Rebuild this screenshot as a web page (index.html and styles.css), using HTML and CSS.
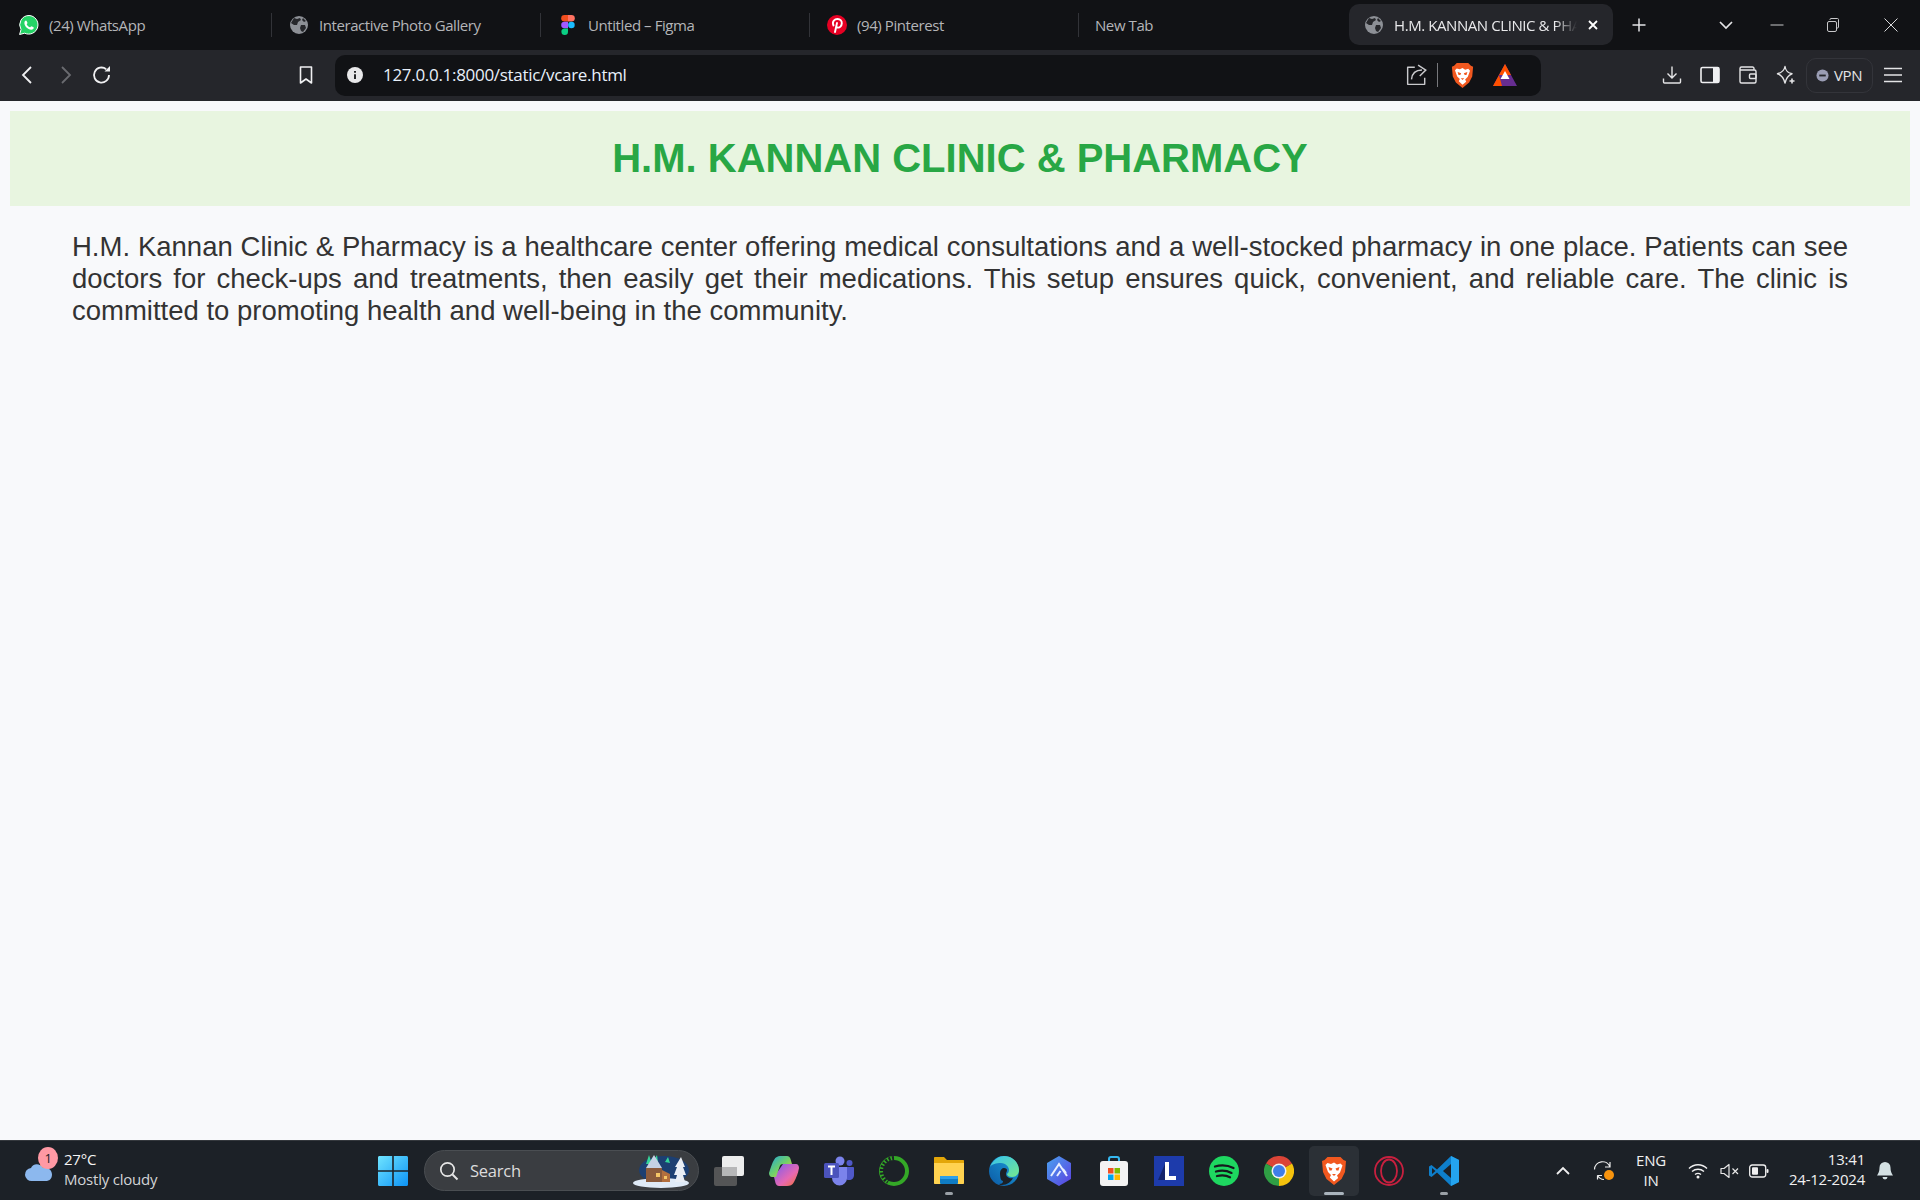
FILE: index.html
```html
<!DOCTYPE html>
<html lang="en">
  <head>
    <meta charset="UTF-8" />
    <meta name="viewport" content="width=device-width, initial-scale=1.0" />
    <title>H.M. KANNAN CLINIC &amp; PHARMACY</title>
    <link rel="stylesheet" href="styles.css">
  </head>
  <body>
    <!-- tab strip -->
    <div class="tabbar">
      <div class="tab">
        <svg class="favicon" viewBox="0 0 20 20"><path d="M10 .5a9.300 9.300 0 0 0-8 14L.6 19.500l5.100-1.300A9.300 9.300 0 1 0 10 .5z" fill="#25d366" stroke="#fff" stroke-width="1"/><path d="M7 5.500c-.6 0-1.600.8-1.600 2.500 0 3 3.400 6.500 6.800 6.700 1.700 0 2.600-1.100 2.600-2 0-.4-2.200-1.500-2.500-1.500s-.9 1.100-1.300 1.100c-.9 0-3-1.900-3.300-3 0-.4.8-.9.800-1.300S7.400 5.500 7 5.500z" fill="#fff"/></svg>
        <span>(24) WhatsApp</span>
      </div>
      <div class="tab">
        <svg class="favicon" viewBox="0 0 20 20"><circle cx="10" cy="10" r="9" fill="#8d9096"/><path d="M5 3l3 1 3-1 1 2-3 2-1 3-3 0-3-2zM12 10l4 0 1 3-3 4-2-1-1-3zM14 3l3 3-2 1-2-2z" fill="#26272b"/></svg>
        <span>Interactive Photo Gallery</span>
      </div>
      <div class="tab">
        <svg class="favicon" viewBox="0 0 14 20"><path d="M3.500 0H7v6.600H3.500a3.300 3.300 0 0 1 0-6.600z" fill="#f24e1e"/><path d="M7 0h3.500a3.300 3.300 0 0 1 0 6.600H7z" fill="#ff7262"/><path d="M3.500 6.700H7v6.600H3.500a3.300 3.300 0 0 1 0-6.600z" fill="#a259ff"/><circle cx="10.400" cy="10" r="3.300" fill="#1abcfe"/><path d="M3.500 13.400H7v3.300a3.300 3.300 0 1 1-3.500-3.300z" fill="#0acf83"/></svg>
        <span>Untitled – Figma</span>
      </div>
      <div class="tab">
        <svg class="favicon" viewBox="0 0 20 20"><circle cx="10" cy="10" r="10" fill="#e60023"/><path d="M8 17l2-9M6.500 10.500C4.500 6 8 4 10.500 4c3 0 4.500 2 4.300 4.300-.2 2.700-2 4.700-4.300 4.200-1-.2-1.400-1-1.400-1" fill="none" stroke="#fff" stroke-width="1.900" stroke-linecap="round"/></svg>
        <span>(94) Pinterest</span>
      </div>
      <div class="tab tab-plain">
        <span>New Tab</span>
      </div>
      <div class="tab-active">
        <svg class="favicon" viewBox="0 0 20 20"><circle cx="10" cy="10" r="9" fill="#8d9096"/><path d="M5 3l3 1 3-1 1 2-3 2-1 3-3 0-3-2zM12 10l4 0 1 3-3 4-2-1-1-3zM14 3l3 3-2 1-2-2z" fill="#26272b"/></svg>
        <span class="tab-title">H.M. KANNAN CLINIC &amp; PHARMACY</span>
        <svg class="tab-close" viewBox="0 0 12 12"><path d="M2 2l8 8M10 2l-8 8" stroke="#fff" stroke-width="1.800"/></svg>
      </div>
      <svg class="new-tab" viewBox="0 0 16 16"><path d="M8 1.500v13M1.500 8h13" stroke="#e4e4e6" stroke-width="1.500"/></svg>
      <div class="window-btns">
        <svg class="win-icon" viewBox="0 0 16 16"><path d="M2 5l6 6 6-6" fill="none" stroke="#e4e4e6" stroke-width="1.700"/></svg>
        <svg class="win-icon" viewBox="0 0 16 16"><path d="M1.500 8h13" stroke="#c8c8ca" stroke-width="1"/></svg>
        <svg class="win-icon" viewBox="0 0 16 16"><rect x="2.500" y="4.500" width="9" height="10" rx="1.500" fill="none" stroke="#c8c8ca"/><path d="M5 3V2.500c0-.6.400-1 1-1h6.500c.6 0 1 .4 1 1V10c0 .6-.4 1-1 1H12" fill="none" stroke="#c8c8ca"/></svg>
        <svg class="win-icon" viewBox="0 0 16 16"><path d="M1.500 1.500l13 13M14.500 1.500l-13 13" stroke="#d8d8da" stroke-width="1"/></svg>
      </div>
    </div>

    <!-- toolbar and address bar -->
    <div class="toolbar">
      <div class="nav-btns">
        <svg class="tool-icon" viewBox="0 0 20 20"><path d="M13 2l-8 8 8 8" fill="none" stroke="#f0f0f2" stroke-width="1.800"/></svg>
        <svg class="tool-icon" viewBox="0 0 20 20"><path d="M7 2l8 8-8 8" fill="none" stroke="#6a6b70" stroke-width="1.800"/></svg>
        <svg class="tool-icon" viewBox="0 0 20 20"><path d="M17 10a7.500 7.500 0 1 1-2.800-5.800" fill="none" stroke="#f0f0f2" stroke-width="1.800"/><path d="M12.500 6.500h5.500v-5.500z" fill="#f0f0f2"/></svg>
        <svg class="tool-icon bookmark" viewBox="0 0 20 20"><path d="M4.500 2h11v16L10 14l-5.500 4z" fill="none" stroke="#f0f0f2" stroke-width="1.600" stroke-linejoin="round"/></svg>
      </div>
      <div class="address">
        <svg class="info-icon" viewBox="0 0 16 16"><circle cx="8" cy="8" r="8" fill="#e8e8ea"/><path d="M8 4v1.800M8 7.200V12" stroke="#111215" stroke-width="1.800"/></svg>
        <span class="url">127.0.0.1:8000/static/vcare.html</span>
        <svg class="share-icon" viewBox="0 0 20 20"><path d="M8 3H1.500v15.500h15.500v-6" fill="none" stroke="#c9c9cc" stroke-width="1.300" stroke-linejoin="round"/><path d="M5 14c.5-5.500 4-8.500 9.500-8.500M11 1l7 4.500-5.500 5.500" fill="none" stroke="#c9c9cc" stroke-width="1.300"/></svg>
        <span class="addr-sep"></span>
        <svg class="lion" viewBox="0 0 26 30"><path d="M6.500 1h13l3 3 2.500 1-1 11-3.500 7-7.500 6-7.500-6L2 16 1 5l2.500-1z" fill="#f1581f"/><path d="M13 6.500l-3 1.500-3.500-1-2 2 2.500 7 3 3-1.200 2.500L13 25.500l4.200-3.500-1.200-2.500 3-3 2.500-7-2-2-3.500 1z" fill="#fff"/><path d="M7.500 11l4 1.500-1 2-2 0zM18.500 11l-4 1.500 1 2 2 0zM11 18h4l-2 2z" fill="#f1581f"/></svg>
        <svg class="bat" viewBox="0 0 24 22"><path d="M12 0l12 22H0z" fill="#662d91"/><path d="M12 0l6 11H6z" fill="#ff5000"/><path d="M6 11L0 22h9z" fill="#ff5000"/><path d="M12 7l4.500 8h-9z" fill="#fff"/></svg>
      </div>
      <div class="tool-right">
        <svg class="tool-icon" viewBox="0 0 20 20"><path d="M10 1.500v11M5.500 8.500l4.500 4.500 4.500-4.500M1.500 13.500v3.500c0 .5.500 1 1 1h15c.5 0 1-.5 1-1v-3.500" fill="none" stroke="#e4e4e6" stroke-width="1.400"/></svg>
        <svg class="tool-icon" viewBox="0 0 20 20"><rect x="1" y="2.500" width="18" height="15" rx="1.500" fill="none" stroke="#f0f0f2" stroke-width="1.600"/><rect x="13" y="2.500" width="6" height="15" fill="#f0f0f2"/></svg>
        <svg class="tool-icon" viewBox="0 0 20 20"><path d="M16 5V3.500c0-.8-.6-1.500-1.500-1.500H3.500C2.600 2 2 2.700 2 3.500v13c0 .8.600 1.500 1.500 1.500h13c.8 0 1.500-.7 1.500-1.500V6.500C18 5.700 17.400 5 16.500 5H2" fill="none" stroke="#e4e4e6" stroke-width="1.400"/><rect x="11.500" y="9" width="6.500" height="4.500" rx="1" fill="none" stroke="#e4e4e6" stroke-width="1.400"/></svg>
        <svg class="tool-icon" viewBox="0 0 20 20"><path d="M9 1.500c.6 4 2 6 7 7.300-3.600 1.300-5.600 3.500-7 9.200-1.400-5.700-3.400-7.900-7.500-9.200 4.800-1.300 6.800-3.300 7.500-7.300z" fill="none" stroke="#e4e4e6" stroke-width="1.400" stroke-linejoin="round"/><path d="M16 13.500v5M13.500 16h5" stroke="#e4e4e6" stroke-width="1.600"/></svg>
        <div class="vpn">
          <svg class="vpn-dot" viewBox="0 0 14 14"><circle cx="7" cy="7" r="6.500" fill="#9a9db4"/><path d="M3.500 7h7" stroke="#25262b" stroke-width="2"/></svg>
          <span>VPN</span>
        </div>
        <svg class="tool-icon menu" viewBox="0 0 20 20"><path d="M1 3.500h18M1 10h18M1 16.500h18" stroke="#e4e4e6" stroke-width="1.400"/></svg>
      </div>
    </div>

    <!-- page content -->
    <main class="page">
      <header class="clinic-header">
        <h1>H.M. KANNAN CLINIC &amp; PHARMACY</h1>
      </header>
      <p class="intro">H.M. Kannan Clinic &amp; Pharmacy is a healthcare center offering medical consultations and a well-stocked pharmacy in one place. Patients can see doctors for check-ups and treatments, then easily get their medications. This setup ensures quick, convenient, and reliable care. The clinic is committed to promoting health and well-being in the community.</p>
    </main>

    <!-- windows taskbar -->
    <footer class="taskbar">
      <div class="weather">
        <svg class="weather-icon" viewBox="0 0 32 24"><circle cx="21" cy="8" r="5" fill="#f58a1f"/><path d="M8 23a6.500 6.500 0 0 1-1-13C8.500 5.500 16 4.500 19 10c5-1.500 9 2 9 6.500s-3 6.500-6 6.500z" fill="#8cb8ee"/></svg>
        <span class="weather-badge">1</span>
        <div class="weather-text">
          <span class="temp">27°C</span>
          <span>Mostly cloudy</span>
        </div>
      </div>

      <svg class="start" viewBox="0 0 30 30">
        <defs><linearGradient id="winblue" x1="0" y1="0" x2="1" y2="1"><stop offset="0" stop-color="#6fe4ff"/><stop offset="1" stop-color="#0d93f5"/></linearGradient></defs>
        <path d="M0 1.500C0 .6.600 0 1.500 0h12.700v14.200H0zM15.800 0h12.700c.9 0 1.500.6 1.500 1.500v12.700H15.800zM0 15.800h14.200V30H1.500C.6 30 0 29.400 0 28.500zM15.800 15.800H30v12.700c0 .9-.6 1.500-1.500 1.500H15.800z" fill="url(#winblue)"/>
      </svg>

      <div class="search">
        <svg class="search-icon" viewBox="0 0 20 20"><circle cx="8.500" cy="8.500" r="6.700" fill="none" stroke="#e6e6e6" stroke-width="1.700"/><path d="M13.500 13.500l5 5" stroke="#e6e6e6" stroke-width="2"/></svg>
        <span>Search</span>
        <svg class="search-art" viewBox="0 0 58 34">
          <ellipse cx="32" cy="16" rx="25" ry="14" fill="#1c3f72"/>
          <path d="M14 10l3-9 3 9zM21 8l4-7 1 7zM33 8l3-5 2 6z" fill="#35d49a"/>
          <ellipse cx="29" cy="29" rx="28" ry="5" fill="#dfeaf7"/>
          <path d="M14 14L22 1l8 13z" fill="#c5d2e4"/>
          <rect x="14" y="14" width="16" height="14" fill="#8a5a3c"/>
          <path d="M30 16l8 4v8h-8z" fill="#b36f3e"/>
          <path d="M24 19h4v4h-4zM32 22h3v3h-3z" fill="#f6c667"/>
          <path d="M49 3l4 10h-2l3 8h-3l2 7h-10l2-7h-3l3-8h-2z" fill="#e9eef5"/>
        </svg>
      </div>

      <div class="apps">
        <div class="app">
          <svg class="app-icon" viewBox="0 0 30 30"><rect x="0" y="11" width="23" height="19" rx="2" fill="#545556"/><rect x="8" y="0" width="22" height="20" rx="2" fill="#eceded"/><rect x="8" y="11" width="15" height="9" fill="#b6b7b8"/></svg>
        </div>
        <div class="app">
          <svg class="app-icon" viewBox="0 0 30 30">
            <defs><linearGradient id="cop" x1="0" y1="0" x2="1" y2="1"><stop offset="0" stop-color="#1fa6d9"/><stop offset=".5" stop-color="#6fd06a"/><stop offset="1" stop-color="#f5c43c"/></linearGradient><linearGradient id="cop2" x1="0" y1="0" x2="1" y2="1"><stop offset="0" stop-color="#7a5cf0"/><stop offset=".6" stop-color="#e668b3"/><stop offset="1" stop-color="#f5732e"/></linearGradient></defs>
            <path d="M18 30h-8c-1.500 0-3-1-3.500-3L5 21l9-13h13c2 0 3 2 3 4-1 6-3 10-5 14-1.500 3-4 4-7 4z" fill="url(#cop2)"/>
            <path d="M11 0h7c1.500 0 3 1 3.500 3l1.500 5h-9c-2 0-3 1-3.500 3L7 21H3c-2 0-3-2-3-4 2-6 3-10 5-13 1.500-3 4-4 6-4z" fill="url(#cop)"/>
          </svg>
        </div>
        <div class="app">
          <svg class="app-icon" viewBox="0 0 30 30"><circle cx="16" cy="5" r="4.500" fill="#7b83eb"/><circle cx="25.500" cy="7" r="3" fill="#5059c9"/><path d="M20 11h9c.5 0 1 .5 1 1v7c0 3-2 5-5 5s-5-2-5-5z" fill="#5059c9"/><path d="M8 11h15v11a7.500 7.500 0 0 1-15 0z" fill="#7b83eb"/><rect x="0" y="7" width="15" height="15" rx="1.500" fill="#4b53bc"/><path d="M4 10.500h7M7.500 10.500V19" stroke="#fff" stroke-width="2"/></svg>
        </div>
        <div class="app">
          <svg class="app-icon" viewBox="0 0 30 30"><circle cx="15" cy="15" r="13" fill="none" stroke="#34a827" stroke-width="4"/><path d="M15 2A13 13 0 0 0 9 26" fill="none" stroke="#1c2127" stroke-width="4" stroke-dasharray="2 1.500"/></svg>
        </div>
        <div class="app app-open">
          <svg class="app-icon" viewBox="0 0 30 30"><path d="M0 2c0-.6.400-1 1-1h9l3 3h16c.6 0 1 .4 1 1v22H0z" fill="#e3a608"/><path d="M0 7h30v20c0 .6-.4 1-1 1H1c-.6 0-1-.4-1-1z" fill="#ffd250"/><rect x="6" y="20" width="18" height="8" rx="1" fill="#0f7cc4"/><rect x="6" y="20" width="18" height="3" rx="1" fill="#2ea0e8"/></svg>
        </div>
        <div class="app">
          <svg class="app-icon" viewBox="0 0 30 30">
            <defs><linearGradient id="edge" x1="0" y1="1" x2="1" y2="0"><stop offset="0" stop-color="#0c59a4"/><stop offset="1" stop-color="#1ba0dc"/></linearGradient><linearGradient id="edge2" x1="0" y1="0" x2="1" y2="1"><stop offset="0" stop-color="#35c1f1"/><stop offset="1" stop-color="#75ea8e"/></linearGradient></defs>
            <circle cx="15" cy="15" r="15" fill="url(#edge)"/>
            <path d="M1 11C4 3 11 0 15 0c9 0 15 7 15 14 0 4-3 7-7 7-3 0-5-1-5-3 1-1 2-2 2-4 0-3-3-7-8-7-5 0-9 1-11 4z" fill="url(#edge2)"/>
            <path d="M11 17c0-3 2-5 4-5s3 1 3 2c0 2-1 2-1 4 0 3 4 5 7 4-2 4-6 7-11 7-1 0-2 0-3-1 3 0 4-1 4-3-2 0-3-3-3-8z" fill="#1c2127"/>
          </svg>
        </div>
        <div class="app">
          <svg class="app-icon" viewBox="0 0 30 30">
            <defs><linearGradient id="hex" x1="0" y1="0" x2="1" y2="1"><stop offset="0" stop-color="#4aa3f0"/><stop offset="1" stop-color="#5b3fe0"/></linearGradient></defs>
            <path d="M15 0l12 7v16l-12 7-12-7V7z" fill="url(#hex)"/>
            <path d="M7 20l8-12 8 12M13 20l3.500-5M19 13l3 4" fill="none" stroke="#e8eeff" stroke-width="2"/>
          </svg>
        </div>
        <div class="app">
          <svg class="app-icon" viewBox="0 0 30 30"><path d="M10 6V3c0-1 .8-2 2-2h6c1.200 0 2 1 2 2v3" fill="none" stroke="#35b8f0" stroke-width="2"/><rect x="1" y="5" width="28" height="25" rx="3" fill="#f3f3f3"/><rect x="9" y="12" width="5.500" height="5.500" fill="#f25022"/><rect x="15.500" y="12" width="5.500" height="5.500" fill="#7fba00"/><rect x="9" y="18.500" width="5.500" height="5.500" fill="#00a4ef"/><rect x="15.500" y="18.500" width="5.500" height="5.500" fill="#ffb900"/></svg>
        </div>
        <div class="app">
          <svg class="app-icon" viewBox="0 0 30 30"><rect width="30" height="30" fill="#1d3bab"/><path d="M11 8v16H4z" fill="#14246b"/><path d="M11 6h4v14h7v4H11z" fill="#fff"/></svg>
        </div>
        <div class="app">
          <svg class="app-icon" viewBox="0 0 30 30"><circle cx="15" cy="15" r="15" fill="#1ed760"/><path d="M6 10.500c6-1.700 13-1.200 18.500 1.500M7 15.500c5-1.300 11-.9 15.500 1.400M8 20c4.500-1 9.500-.7 13 1.300" fill="none" stroke="#16191d" stroke-width="2.300" stroke-linecap="round"/></svg>
        </div>
        <div class="app">
          <svg class="app-icon" viewBox="0 0 30 30"><path d="M15 15L2 7.500A15 15 0 0 1 28 7.500z" fill="#db4437"/><path d="M15 15l13-7.500A15 15 0 0 1 15 30z" fill="#f4c20d"/><path d="M15 15v15A15 15 0 0 1 2 7.500z" fill="#2f9e44"/><circle cx="15" cy="15" r="7.500" fill="#f1f1f1"/><circle cx="15" cy="15" r="6" fill="#3f7ee8"/></svg>
        </div>
        <div class="app app-active">
          <svg class="app-icon" viewBox="0 0 26 30"><path d="M6.500 1h13l3 3 2.500 1-1 11-3.500 7-7.500 6-7.500-6L2 16 1 5l2.500-1z" fill="#f1581f"/><path d="M13 6.500l-3 1.500-3.500-1-2 2 2.500 7 3 3-1.200 2.500L13 25.500l4.200-3.500-1.200-2.500 3-3 2.500-7-2-2-3.500 1z" fill="#fff"/><path d="M7.500 11l4 1.500-1 2-2 0zM18.500 11l-4 1.500 1 2 2 0zM11 18h4l-2 2z" fill="#f1581f"/></svg>
        </div>
        <div class="app">
          <svg class="app-icon" viewBox="0 0 30 30"><circle cx="15" cy="15" r="14" fill="none" stroke="#c8203f" stroke-width="1.800"/><ellipse cx="15" cy="15" rx="8" ry="11.500" fill="none" stroke="#c8203f" stroke-width="1.800"/></svg>
        </div>
        <div class="app app-open">
          <svg class="app-icon" viewBox="0 0 30 30"><path d="M22 0l8 4v22l-8 4L8 16.500 2.500 21 0 19.500V10.500L2.500 9 8 13.500z" fill="#0e7fcb"/><path d="M22 0l8 4v22l-8 4z" fill="#24a4ef"/><path d="M22 8l-8 7 8 7z" fill="#1c2127"/><path d="M3 12l3.500 3L3 18z" fill="#1c2127"/></svg>
        </div>
      </div>

      <div class="tray">
        <svg class="tray-chevron" viewBox="0 0 14 10"><path d="M1 8l6-6 6 6" fill="none" stroke="#f0f0f0" stroke-width="1.800"/></svg>
        <svg class="tray-sync" viewBox="0 0 22 22"><path d="M1.500 9.500A8 8 0 0 1 17 7M17 2v5h-5M4.500 15.500h4.500M4.500 15.500v4" fill="none" stroke="#ededed" stroke-width="1.200"/><path d="M4.500 15.500A8 8 0 0 0 11 19.500" fill="none" stroke="#ededed" stroke-width="1.200"/><circle cx="16" cy="15" r="5" fill="#f7930e"/></svg>
        <div class="lang"><span>ENG</span><span>IN</span></div>
        <svg class="tray-wifi" viewBox="0 0 20 16"><path d="M1 5.500c5-5 13-5 18 0M4 8.500c3.500-3 8.500-3 12 0M7 11.500c1.700-1.300 4.300-1.300 6 0" fill="none" stroke="#f0f0f0" stroke-width="1.400"/><circle cx="10" cy="14" r="1.500" fill="#f0f0f0"/></svg>
        <svg class="tray-sound" viewBox="0 0 20 16"><path d="M1 5.500h3L9 1.500v13L4 10.500H1z" fill="none" stroke="#e8e8e8" stroke-width="1.200" stroke-linejoin="round"/><path d="M12.500 5.500l5.500 5.500M18 5.500L12.500 11" stroke="#e8e8e8" stroke-width="1.200"/></svg>
        <svg class="tray-battery" viewBox="0 0 20 14"><rect x=".7" y="1" width="16" height="12" rx="2.500" fill="none" stroke="#f0f0f0" stroke-width="1.300"/><rect x="3" y="3.200" width="6" height="7.600" rx="1" fill="#f0f0f0"/><rect x="17.500" y="5" width="2" height="4" rx="1" fill="#f0f0f0"/></svg>
        <div class="clock"><span>13:41</span><span>24-12-2024</span></div>
        <svg class="tray-bell" viewBox="0 0 18 20"><path d="M9 1a5.500 5.500 0 0 0-5.500 5.500c0 4-1.200 6-2.500 8h16c-1.300-2-2.500-4-2.500-8A5.500 5.500 0 0 0 9 1z" fill="#d3e0e3"/><path d="M6.500 16h5a2.500 2.500 0 0 1-5 0z" fill="#d3e0e3"/></svg>
      </div>
    </footer>
  </body>
</html>
```

FILE: styles.css
```css
/* 页面基础 */
* {
  box-sizing: border-box;
}

body {
  margin: 0;
  height: 100vh;
  display: flex;
  flex-direction: column;
  overflow: hidden;
  background-color: #f8f9fb;
  font-family: "Open Sans", "Noto Sans", sans-serif;
}

svg {
  display: block;
  flex-shrink: 0;
}

/* 标签栏 */
.tabbar {
  height: 50px;
  display: flex;
  align-items: center;
  background-color: #111215;
  color: #b4b5b8;
  font-size: 15px;
  letter-spacing: -0.42px;
}

.tab {
  width: 269px;
  height: 24px;
  padding-left: 17px;
  display: flex;
  align-items: center;
  gap: 10px;
  border-right: 1px solid #323338;
}

.tab:first-child {
  width: 272px;
  padding-left: 19px;
}

.tab:nth-child(3) {
  gap: 13px;
  padding-left: 20px;
}

.tab:nth-child(5) {
  border-right: none;
  padding-left: 16px;
  width: 270px;
}

.favicon {
  width: 20px;
  height: 20px;
}

.tab:nth-child(3) .favicon {
  width: 14px;
}

.tab-active {
  width: 264px;
  height: 41px;
  margin-bottom: 1px;
  padding: 0 14px 0 15px;
  display: flex;
  align-items: center;
  gap: 10px;
  border-radius: 10px;
  background-color: #25262b;
  color: #e9e9eb;
}

.tab-title {
  flex: 1;
  overflow: hidden;
  white-space: nowrap;
  mask-image: linear-gradient(to right, #000 88%, transparent);
}

.tab-close {
  width: 12px;
  height: 12px;
}

.new-tab {
  width: 16px;
  height: 16px;
  margin-left: 18px;
}

.window-btns {
  margin-left: auto;
  padding-right: 21px;
  display: flex;
}

.win-icon {
  width: 16px;
  height: 16px;
  margin-left: 40px;
}

.win-icon:nth-child(2) {
  margin-left: 35px;
}

.win-icon:nth-child(4) {
  margin-left: 42px;
}

/* 工具栏 */
.toolbar {
  height: 51px;
  padding-bottom: 1px;
  display: flex;
  align-items: center;
  background-color: #25262b;
}

.nav-btns {
  width: 335px;
  padding-left: 18px;
  display: flex;
  align-items: center;
  gap: 17px;
}

.tool-icon {
  width: 20px;
  height: 20px;
}

.bookmark {
  margin-left: 167px;
}

.address {
  width: 1206px;
  height: 41px;
  padding: 0 24px 0 12px;
  display: flex;
  align-items: center;
  border-radius: 10px;
  background-color: #111215;
  color: #e8f0fa;
  font-size: 17px;
  letter-spacing: -0.3px;
}

.info-icon {
  width: 16px;
  height: 16px;
}

.url {
  margin-left: 20px;
  padding-bottom: 2px;
  flex: 1;
}

.share-icon {
  width: 22px;
  height: 22px;
}

.addr-sep {
  width: 1px;
  height: 24px;
  margin: 0 13px 0 9px;
  background-color: #77787c;
}

.lion {
  width: 23px;
  height: 27px;
}

.bat {
  width: 24px;
  height: 22px;
  margin-left: 19px;
}

.tool-right {
  flex: 1;
  padding-left: 121px;
  display: flex;
  align-items: center;
  gap: 18px;
}

.vpn {
  width: 67px;
  height: 35px;
  margin-left: -8px;
  padding-left: 9px;
  display: flex;
  align-items: center;
  gap: 5px;
  border: 1px solid #33343a;
  border-radius: 10px;
  color: #e4e4e6;
  font-size: 15px;
  letter-spacing: -0.4px;
}

.vpn-dot {
  width: 13px;
  height: 13px;
}

.menu {
  margin-left: -8px;
}

/* 页面内容 */
.page {
  flex: 1;
  padding: 10px;
}

.clinic-header {
  height: 95px;
  display: flex;
  align-items: center;
  justify-content: center;
  background-color: #e8f5e0;
}

h1 {
  margin: 0;
  color: #28a745;
  font-family: "Liberation Sans", Arial, sans-serif;
  font-size: 40px;
  font-weight: bold;
}

.intro {
  margin: 25px 62px 0 62px;
  color: #333;
  font-family: "Liberation Sans", Arial, sans-serif;
  font-size: 27.5px;
  line-height: 32px;
  text-align: justify;
}

/* 任务栏 */
.taskbar {
  height: 60px;
  display: flex;
  align-items: center;
  border-top: 1px solid #34383d;
  background-color: #1c2127;
  color: #f0f0f0;
  font-size: 15px;
  letter-spacing: -0.22px;
}

.weather {
  position: relative;
  width: 378px;
  padding-left: 64px;
}

.weather-icon {
  position: absolute;
  left: 24px;
  top: 9px;
  width: 32px;
  height: 24px;
}

.weather-badge {
  position: absolute;
  left: 38px;
  top: -2px;
  width: 20px;
  height: 22px;
  border-radius: 50%;
  background-color: #ff99a4;
  color: #1c2127;
  font-size: 13px;
  line-height: 22px;
  text-align: center;
}

.weather-text {
  padding-bottom: 4px;
  display: flex;
  flex-direction: column;
  line-height: 20px;
  color: #d3d4d6;
}

.temp {
  color: #f4f4f4;
}

.start {
  width: 30px;
  height: 30px;
}

.search {
  width: 275px;
  height: 41px;
  margin-left: 16px;
  padding: 0 0 0 14px;
  display: flex;
  align-items: center;
  border: 1px solid #4a4e52;
  border-radius: 21px;
  background-color: #3a3d41;
  color: #dcdcdc;
  font-size: 16.5px;
}

.search-icon {
  width: 20px;
  height: 20px;
}

.search > span {
  margin-left: 11px;
  flex: 1;
}

.search-art {
  width: 58px;
  height: 34px;
  margin-right: 8px;
}

.apps {
  margin-left: 2px;
  display: flex;
}

.app {
  position: relative;
  width: 55px;
  height: 50px;
  display: flex;
  align-items: center;
  justify-content: center;
}

.app-icon {
  width: 30px;
  height: 30px;
}

.app-open::after,
.app-active::after {
  content: "";
  position: absolute;
  bottom: 1px;
  left: 50%;
  width: 8px;
  height: 3px;
  margin-left: -4px;
  border-radius: 2px;
  background-color: #9aa0a6;
}

.app-active {
  width: 50px;
  margin: 0 2.5px;
  border-radius: 5px;
  background-color: #2b3036;
}

.app-active::after {
  width: 20px;
  margin-left: -10px;
  background-color: #aab4bd;
}

.tray {
  flex: 1;
  padding-left: 85px;
  display: flex;
  align-items: center;
}

.tray-chevron {
  width: 14px;
  height: 10px;
}

.tray-sync {
  width: 22px;
  height: 22px;
  margin-left: 23px;
}

.lang {
  width: 40px;
  margin-left: 16px;
  padding-bottom: 1px;
  display: flex;
  flex-direction: column;
  align-items: center;
  line-height: 20px;
}

.tray-wifi {
  width: 20px;
  height: 16px;
  margin-left: 17px;
}

.tray-sound {
  width: 20px;
  height: 16px;
  margin-left: 12px;
}

.tray-battery {
  width: 20px;
  height: 14px;
  margin-left: 9px;
}

.clock {
  width: 90px;
  margin-left: 6px;
  padding-bottom: 4px;
  display: flex;
  flex-direction: column;
  align-items: flex-end;
  line-height: 20px;
}

.tray-bell {
  width: 18px;
  height: 20px;
  margin-left: 11px;
}
```
